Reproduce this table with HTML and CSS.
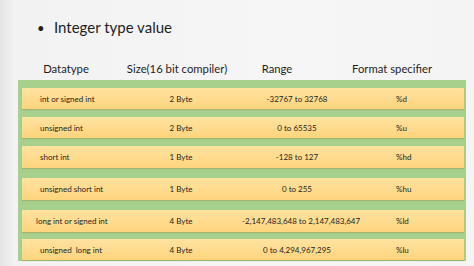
FILE: index.html
```html
<!DOCTYPE html>
<html lang="en">
<head>
    <meta charset="UTF-8">
    <meta name="viewport" content="width=device-width, initial-scale=1.0">
    <title>Integer type value</title>
    <link rel="stylesheet" href="styles.css">
</head>
<body>
    <div class="slide">
        <h1 class="title"><span class="bullet">&bull;</span>Integer type value</h1>
        <div class="head">
            <div>Datatype</div>
            <div>Size(16 bit compiler)</div>
            <div>Range</div>
            <div>Format specifier</div>
        </div>
        <div class="panel">
            <div class="row">
                <div class="name">int or signed int</div>
                <div class="size">2 Byte</div>
                <div class="range">-32767 to 32768</div>
                <div class="spec">%d</div>
            </div>
            <div class="row">
                <div class="name">unsigned int</div>
                <div class="size">2 Byte</div>
                <div class="range">0 to 65535</div>
                <div class="spec">%u</div>
            </div>
            <div class="row">
                <div class="name">short int</div>
                <div class="size">1 Byte</div>
                <div class="range">-128 to 127</div>
                <div class="spec">%hd</div>
            </div>
            <div class="row">
                <div class="name">unsigned short int</div>
                <div class="size">1 Byte</div>
                <div class="range">0 to 255</div>
                <div class="spec">%hu</div>
            </div>
            <div class="row">
                <div class="name long">long int or signed int</div>
                <div class="size">4 Byte</div>
                <div class="range">-2,147,483,648 to 2,147,483,647</div>
                <div class="spec">%ld</div>
            </div>
            <div class="row">
                <div class="name">unsigned&nbsp; long int</div>
                <div class="size">4 Byte</div>
                <div class="range">0 to 4,294,967,295</div>
                <div class="spec">%lu</div>
            </div>
        </div>
    </div>
</body>
</html>
```

FILE: styles.css
```css
body {
    margin: 0;
    font-family: Lato, "Open Sans", sans-serif;
    color: #1e1e1e;
}
.slide {
    width: 474px;
    height: 266px;
    overflow: hidden;
    background: linear-gradient(90deg, #e4e4e4 0, #f2f2f2 14px, #f6f6f6 60%, #f4f4f4 100%);
}
.title {
    margin: 0;
    padding: 15px 0 0 37px;
    height: 25px;
    font-size: 15px;
    font-weight: normal;
    line-height: 24px;
}
.bullet {
    display: inline-block;
    width: 17px;
    font-size: 13px;
}
.head {
    display: grid;
    grid-template-columns: 88px 134px 66px 164px;
    margin: 21px 0 0 22px;
    height: 19px;
    font-size: 11.3px;
    line-height: 16px;
    text-align: center;
    white-space: nowrap;
}
.panel {
    margin-left: 18px;
    width: 448px;
    height: 181px;
    padding: 8px 2px 0 4px;
    box-sizing: border-box;
    background-color: #a8d08d;
}
.row {
    display: grid;
    grid-template-columns: 98px 122px 110px 112px;
    align-items: center;
    height: 21px;
    margin-bottom: 8px;
    font-size: 8px;
    white-space: nowrap;
    background: linear-gradient(#ffe3a0, #fed47d);
    box-shadow: 0 1px 1px rgba(150, 130, 60, 0.35);
}
.row:nth-child(3),
.row:nth-child(4) {
    height: 22px;
    margin-bottom: 10px;
}
.row:nth-child(5) {
    height: 22px;
    margin-bottom: 7px;
}
.name {
    padding-left: 18px;
}
.name.long {
    padding-left: 14px;
}
.size,
.range {
    text-align: center;
}
.spec {
    padding-left: 44px;
}
```
